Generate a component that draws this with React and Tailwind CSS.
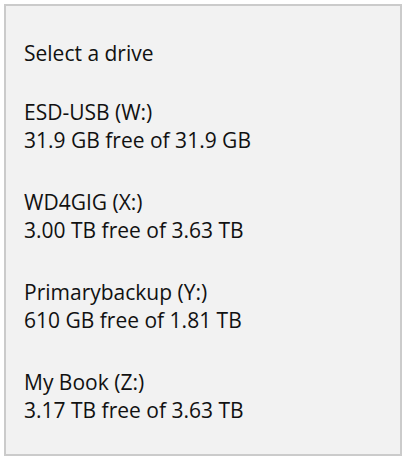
import React from "react";

const drives = [
  { name: "ESD-USB (W:)", space: "31.9 GB free of 31.9 GB" },
  { name: "WD4GIG (X:)", space: "3.00 TB free of 3.63 TB" },
  { name: "Primarybackup (Y:)", space: "610 GB free of 1.81 TB" },
  { name: "My Book (Z:)", space: "3.17 TB free of 3.63 TB" },
];

const App = () => {
  return (
    <div className="w-[404px] h-[461px] bg-white pt-1 pl-1">
      <div
        className="w-[398px] h-[452px] bg-[#f2f2f2] border-2 border-[#cbcbcb] pl-[18px] pt-[33px] text-[#111] text-[21px] leading-[28px]"
        style={{ fontFamily: '"Open Sans", "Noto Sans", sans-serif' }}
      >
        <p>Select a drive</p>
        <div className="mt-[31px] flex flex-col gap-[34px]">
          {drives.map((d) => (
            <div key={d.name}>
              <p>{d.name}</p>
              <p>{d.space}</p>
            </div>
          ))}
        </div>
      </div>
    </div>
  );
};

export default App;
